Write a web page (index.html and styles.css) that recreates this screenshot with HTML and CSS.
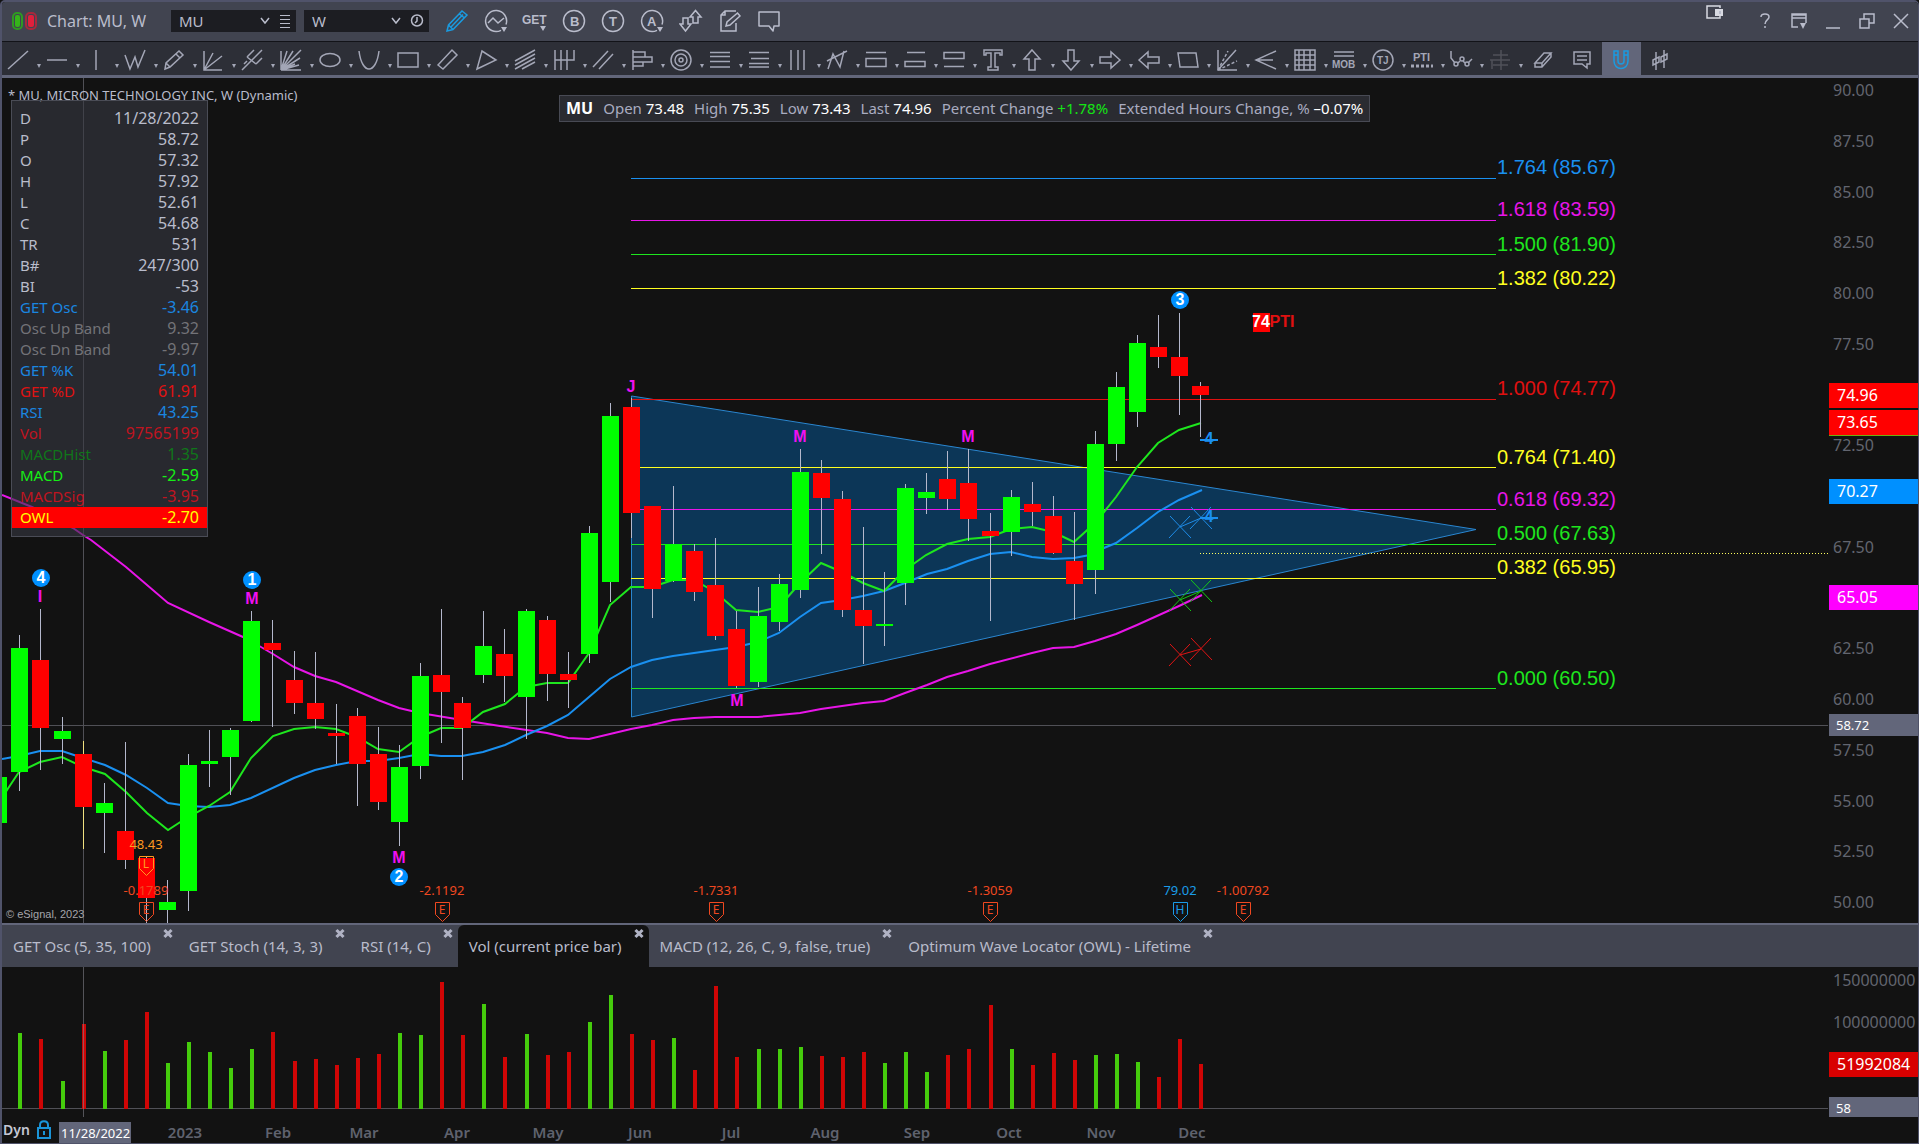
FILE: index.html
```html
<!DOCTYPE html>
<html lang="en">
<head>
<meta charset="utf-8">
<title>Chart: MU, W</title>
<link rel="stylesheet" href="styles.css">
</head>
<body>
<main class="window">
  <header class="titlebar">
    <svg class="link-state" width="26" height="18" viewBox="0 0 26 18" aria-hidden="true">
      <rect x="1" y="1" width="9" height="16" rx="4" fill="none" stroke="#2f9a22" stroke-width="2"/><rect x="3" y="3" width="5" height="12" rx="2" fill="#35b41a"/>
      <rect x="14" y="1" width="10" height="16" rx="4" fill="none" stroke="#a8283c" stroke-width="2"/><rect x="16" y="3" width="6" height="12" rx="2" fill="#e0203c"/>
    </svg>
    <h1 class="title">Chart: MU, W</h1>
    <div class="picker">
      <select aria-label="Symbol"><option>MU</option></select>
      <svg width="12" height="22" viewBox="0 0 12 22"><path d="M2 8l4 5 4-5"/></svg>
      <svg width="12" height="22" viewBox="0 0 12 22"><path d="M1 5.500h10M1 9.500h10M1 13.500h10M1 17.500h10" stroke-width="1"/></svg>
    </div>
    <div class="picker">
      <select aria-label="Interval"><option>W</option></select>
      <svg width="12" height="22" viewBox="0 0 12 22"><path d="M2 8l4 5 4-5"/></svg>
      <svg width="14" height="22" viewBox="0 0 14 22"><circle cx="7" cy="10.500" r="5.500"/><path d="M7 7v4l-2 2"/></svg>
    </div>
    <div class="commands">
      <button class="cmd on" aria-label="Draw"><svg width="24" height="24" viewBox="0 0 24 24"><path d="M2 22l1.500-6L17 2l5 4L8 20.500zM3.500 16L8 20.500M14.500 5l5 4M6 18L18 5.500"/></svg></button>
      <button class="cmd" aria-label="Studies"><svg width="24" height="24" viewBox="0 0 24 24"><path d="M17 21.300A10.500 10.500 0 1 1 22 15.500M4 14l5-5 5 5 6-5"/><path class="solid" d="M17 18h6l-3 5z"/></svg></button>
      <button class="cmd" aria-label="GET studies"><svg width="26" height="24" viewBox="0 0 26 24"><text x="0" y="15" font-size="12">GET</text><path class="solid" d="M18 17h6l-3 5z"/></svg></button>
      <button class="cmd" aria-label="Bars"><svg width="24" height="24" viewBox="0 0 24 24"><circle cx="12" cy="12" r="10.500"/><text x="8" y="17" font-size="13">B</text></svg></button>
      <button class="cmd" aria-label="Templates"><svg width="24" height="24" viewBox="0 0 24 24"><circle cx="12" cy="12" r="10.500"/><text x="8" y="17" font-size="13">T</text></svg></button>
      <button class="cmd" aria-label="Alerts"><svg width="24" height="24" viewBox="0 0 24 24"><path d="M17 21.300A10.500 10.500 0 1 1 22 15.500"/><text x="7" y="17" font-size="13">A</text><path class="solid" d="M17 18h6l-3 5z"/></svg></button>
      <button class="cmd" aria-label="Trade"><svg width="24" height="24" viewBox="0 0 24 24"><path d="M11 8l5.500-6.500L22 8h-3v6h-5V8zM1 15h3V9h5v6h3l-5.500 7z"/></svg></button>
      <button class="cmd" aria-label="Edit notes"><svg width="24" height="24" viewBox="0 0 24 24"><path d="M18 14v8H3V6l4-4h11M3 6h4V2M8 17l1-4L19.500 4 22 7 12 16z"/></svg></button>
      <button class="cmd" aria-label="Chat"><svg width="24" height="24" viewBox="0 0 24 24"><path d="M2 3h20v14h-5l-1 5-4-5H2z" stroke-linejoin="round"/></svg></button>
    </div>
    <div class="window-buttons">
      <button class="popout" aria-label="Pop out"><svg width="18" height="15" viewBox="0 0 18 15"><path d="M14 3V1H1v12h13v-2" stroke="#d8dae2"/><rect class="solid light" x="9" y="4" width="8" height="7"/><rect class="solid" x="13" y="6" width="2" height="3"/></svg></button>
      <button class="cmd" aria-label="Help"><svg width="16" height="18" viewBox="0 0 16 18"><path d="M4 5c0-4 8-4 8 0 0 3-4 3-4 7M8 14v2"/></svg></button>
      <button class="cmd" aria-label="Layout"><svg width="18" height="18" viewBox="0 0 18 18"><path d="M8 15H2V2h14v9M2 6h14M2 3h14"/><path class="solid" d="M10 11h6l-3 6z"/></svg></button>
      <button class="cmd" aria-label="Minimize"><svg width="18" height="18" viewBox="0 0 18 18"><path d="M2 16h14"/></svg></button>
      <button class="cmd" aria-label="Restore"><svg width="18" height="18" viewBox="0 0 18 18"><path d="M2 7h9v9H2zM6 7V2h10v9h-5"/></svg></button>
      <button class="cmd" aria-label="Close"><svg width="18" height="18" viewBox="0 0 18 18"><path d="M2 2l14 14M16 2L2 16"/></svg></button>
    </div>
  </header>

  <nav class="tools" aria-label="Drawing tools">
    <button class="tool more" aria-label="Line"><svg viewBox="0 0 24 24"><path d="M2 21L22 3"/></svg></button>
    <button class="tool more" aria-label="Horizontal line"><svg viewBox="0 0 24 24"><path d="M2 12h20"/></svg></button>
    <button class="tool more" aria-label="Vertical line"><svg viewBox="0 0 24 24"><path d="M12 2v20"/></svg></button>
    <button class="tool more" aria-label="Polyline"><svg viewBox="0 0 24 24"><path d="M2 7l5 14 5-12 3 10 7-17"/></svg></button>
    <button class="tool more" aria-label="Pencil"><svg viewBox="0 0 24 24"><path d="M3 21l1-6L17 3l4 4L8 19zM4 15l4 4M14 6l4 4"/></svg></button>
    <button class="tool more" aria-label="Gann fan"><svg viewBox="0 0 24 24"><path d="M3 3v19h18M3 22L21 8M3 22L12 5"/></svg></button>
    <button class="tool more" aria-label="Pitchfork"><svg viewBox="0 0 24 24"><path d="M2 22L22 2M7 9l9 7M7 9l7-7M16 16l6-6M4 16l3-3"/></svg></button>
    <button class="tool more" aria-label="Speed lines"><svg viewBox="0 0 24 24"><path d="M2 22V3M2 22L8 3M2 22L22 2M2 22l19-12M2 22h20M2 22l18-5M2 22L14 3M2 22l14-6"/></svg></button>
    <button class="tool more" aria-label="Ellipse"><svg viewBox="0 0 24 24"><ellipse cx="12" cy="12" rx="10" ry="6.500"/></svg></button>
    <button class="tool more" aria-label="Arc"><svg viewBox="0 0 24 24"><path d="M2 3c3 24 17 24 20 0"/></svg></button>
    <button class="tool more" aria-label="Rectangle"><svg viewBox="0 0 24 24"><path d="M2 5h20v14H2z"/></svg></button>
    <button class="tool more" aria-label="Parallelogram"><svg viewBox="0 0 24 24"><path d="M3 17L17 2l5 5L8 21z"/></svg></button>
    <button class="tool more" aria-label="Triangle"><svg viewBox="0 0 24 24"><path d="M3 21L8 3l14 9z"/></svg></button>
    <button class="tool more" aria-label="Channel"><svg viewBox="0 0 24 24"><path d="M2 13L22 2M2 17L22 6M2 21l20-11M9 21l13-7"/></svg></button>
    <button class="tool more" aria-label="Cycles"><svg viewBox="0 0 24 24"><path d="M3 2v20M9 2v20M15 2v20M22 2v10H3"/></svg></button>
    <button class="tool more" aria-label="Parallel lines"><svg viewBox="0 0 24 24"><path d="M2 19L17 3M8 21L22 6"/></svg></button>
    <button class="tool more" aria-label="Volume profile"><svg viewBox="0 0 24 24"><path d="M3 2v20M3 4h12v5H3M3 9h19v5H3M3 14h10v4H3"/></svg></button>
    <button class="tool more" aria-label="Fibonacci circles"><svg viewBox="0 0 24 24"><circle cx="12" cy="12" r="10"/><circle cx="12" cy="12" r="6"/><circle cx="12" cy="12" r="2"/></svg></button>
    <button class="tool more" aria-label="Retracement"><svg viewBox="0 0 24 24"><path d="M2 4.500h20M2 8.500h20M2 13.500h20M2 19h20"/></svg></button>
    <button class="tool more" aria-label="Extension"><svg viewBox="0 0 24 24"><path d="M2 4.500h20M4 10.500h18M2 15.500h20M2 19h20"/></svg></button>
    <button class="tool more" aria-label="Time lines"><svg viewBox="0 0 24 24"><path d="M5 2v20M12 2v20M18 2v20"/></svg></button>
    <button class="tool more" aria-label="Regression"><svg viewBox="0 0 24 24"><path d="M3 21L8 6l7 13 4-16M2 13L22 3"/></svg></button>
    <button class="tool more" aria-label="Price range"><svg viewBox="0 0 24 24"><path d="M2 4.500h20M2 10.500h20v8H2z"/></svg></button>
    <button class="tool more" aria-label="Price band low"><svg viewBox="0 0 24 24"><path d="M4 4.500h18M2 13.500h20v5H2z"/></svg></button>
    <button class="tool more" aria-label="Price band high"><svg viewBox="0 0 24 24"><path d="M2 4.500h20v6H2zM2 18.500h20"/></svg></button>
    <button class="tool more" aria-label="Text"><svg viewBox="0 0 24 24"><path d="M3 2h18v5h-2V5h-5v14h3v3H7v-3h3V5H5v2H3z"/></svg></button>
    <button class="tool more" aria-label="Up arrow"><svg viewBox="0 0 24 24"><path d="M12 2l8 9h-5v11H9V11H4z"/></svg></button>
    <button class="tool more" aria-label="Down arrow"><svg viewBox="0 0 24 24"><path d="M12 22l8-9h-5V2H9v11H4z"/></svg></button>
    <button class="tool more" aria-label="Right arrow"><svg viewBox="0 0 24 24"><path d="M22 12l-9-8v5H2v6h11v5z"/></svg></button>
    <button class="tool more" aria-label="Left arrow"><svg viewBox="0 0 24 24"><path d="M2 12l9-8v5h11v6H11v5z"/></svg></button>
    <button class="tool more" aria-label="Zone"><svg viewBox="0 0 24 24"><path d="M2 5h18l2 14H4z"/></svg></button>
    <button class="tool more" aria-label="Square of range"><svg viewBox="0 0 24 24"><path d="M3 2v20h19M3 22L21 2"/><path d="M3 22L13 3M3 22l19-9" stroke-dasharray="3 2"/></svg></button>
    <button class="tool more" aria-label="Andrews fork"><svg viewBox="0 0 24 24"><path d="M22 3L2 12l20 9M2 12h17"/></svg></button>
    <button class="tool more" aria-label="Grid"><svg viewBox="0 0 24 24"><path d="M2 2h20v20H2zM6 2v20M11 2v20M17 2v20M2 7h20M2 12h20M2 17h20"/></svg></button>
    <button class="tool more" aria-label="Make or break"><svg viewBox="0 0 24 24"><path d="M2 4h20M2 8h20"/><text x="0" y="20" font-size="10">MOB</text></svg></button>
    <button class="tool more" aria-label="Trade journal"><svg viewBox="0 0 24 24"><circle cx="12" cy="12" r="10"/><text x="6" y="16" font-size="10">TJ</text></svg></button>
    <button class="tool more" aria-label="Profit taking index"><svg viewBox="0 0 24 24"><text x="3" y="13" font-size="11">PTI</text><path d="M1 18h22" stroke-width="3" stroke-dasharray="3 2"/></svg></button>
    <button class="tool more" aria-label="Elliott wave"><svg viewBox="0 0 24 24"><path d="M2 3v7l4 5M9 15l2-2M14 13l2 2M19 15l4-4"/><circle cx="7" cy="16" r="2"/><circle cx="13" cy="11" r="2"/><circle cx="18" cy="16" r="2"/></svg></button>
    <button class="tool more" aria-label="Ladder" disabled><svg viewBox="0 0 24 24"><path d="M13 2v20M5 7h15M2 12h20M5 17h15M4 12v9"/></svg></button>
    <button class="tool first" aria-label="Erase"><svg viewBox="0 0 24 24"><path d="M4 15L13 5h7l-9 10zM4 15v4h7l9-10V5M11 15v4"/></svg></button>
    <button class="tool" aria-label="Comment"><svg viewBox="0 0 24 24"><path d="M4 4h16v12h-3v4l-5-4H4zM7 8h10M7 12h10"/></svg></button>
    <button class="tool active" aria-label="Magnet"><svg viewBox="0 0 24 24"><path d="M5 3v10c0 10 14 10 14 0V3h-4v10c0 4-6 4-6 0V3zM5 7h4M15 7h4"/></svg></button>
    <button class="tool" aria-label="Settings"><svg viewBox="0 0 24 24"><path d="M8 4v18M16 2v18M5 12l6-3v5l-6 3zM13 9l6-3v5l-6 3z"/></svg></button>
  </nav>

  <section class="chart" aria-label="Price chart">
    <svg id="price" class="plot" viewBox="2 78 1916 845" role="img" aria-label="MU weekly candles"></svg>
    <table class="legend">
      <tbody>
        <tr><th scope="row">D</th><td>11/28/2022</td></tr>
        <tr><th scope="row">P</th><td>58.72</td></tr>
        <tr><th scope="row">O</th><td>57.32</td></tr>
        <tr><th scope="row">H</th><td>57.92</td></tr>
        <tr><th scope="row">L</th><td>52.61</td></tr>
        <tr><th scope="row">C</th><td>54.68</td></tr>
        <tr><th scope="row">TR</th><td>531</td></tr>
        <tr><th scope="row">B#</th><td>247/300</td></tr>
        <tr><th scope="row">BI</th><td>-53</td></tr>
        <tr class="blue"><th scope="row">GET Osc</th><td>-3.46</td></tr>
        <tr class="grey"><th scope="row">Osc Up Band</th><td>9.32</td></tr>
        <tr class="grey"><th scope="row">Osc Dn Band</th><td>-9.97</td></tr>
        <tr class="blue"><th scope="row">GET %K</th><td>54.01</td></tr>
        <tr class="red"><th scope="row">GET %D</th><td>61.91</td></tr>
        <tr class="blue"><th scope="row">RSI</th><td>43.25</td></tr>
        <tr class="crimson"><th scope="row">Vol</th><td>97565199</td></tr>
        <tr class="green"><th scope="row">MACDHist</th><td>1.35</td></tr>
        <tr class="lime"><th scope="row">MACD</th><td>-2.59</td></tr>
        <tr class="crimson"><th scope="row">MACDSig</th><td>-3.95</td></tr>
        <tr class="owl"><th scope="row">OWL</th><td>-2.70</td></tr>
      </tbody>
    </table>
    <div class="quote">
      <b>MU</b>
      <span>Open <em>73.48</em></span>
      <span>High <em>75.35</em></span>
      <span>Low <em>73.43</em></span>
      <span>Last <em>74.96</em></span>
      <span>Percent Change <em class="up">+1.78%</em></span>
      <span>Extended Hours Change, % <em>–0.07%</em></span>
    </div>
  </section>

  <div class="tabs" role="tablist">
    <div class="tab"><button role="tab">GET Osc (5, 35, 100)</button><button class="close" aria-label="Close GET Osc"></button></div>
    <div class="tab"><button role="tab">GET Stoch (14, 3, 3)</button><button class="close" aria-label="Close GET Stoch"></button></div>
    <div class="tab"><button role="tab">RSI (14, C)</button><button class="close" aria-label="Close RSI"></button></div>
    <div class="tab current"><button role="tab" aria-selected="true">Vol (current price bar)</button><button class="close" aria-label="Close Vol"></button></div>
    <div class="tab"><button role="tab">MACD (12, 26, C, 9, false, true)</button><button class="close" aria-label="Close MACD"></button></div>
    <div class="tab"><button role="tab">Optimum Wave Locator (OWL) - Lifetime</button><button class="close" aria-label="Close OWL"></button></div>
  </div>

  <section aria-label="Volume">
    <svg id="volume" class="plot" viewBox="2 967 1916 176" role="img" aria-label="Weekly volume"></svg>
  </section>
</main>
<script src="chart.js"></script>
</body>
</html>
```
FILE: styles.css
```css
* { box-sizing: border-box; }

body {
  margin: 0;
  background: #121212;
  color: #b9bccb;
  font: 15px/20px "Noto Sans", sans-serif;
}

button, select {
  border: 0;
  padding: 0;
  background: none;
  color: inherit;
  font: inherit;
}

.window {
  border: solid #50536a;
  border-width: 2px 1px 1px 2px;
  border-radius: 5px 5px 0 0;
  overflow: hidden;
}

.titlebar {
  display: flex;
  align-items: center;
  height: 40px;
  padding: 0 0 1px 10px;
  background: #414450;
  border-bottom: 1px solid #121318;
}

.titlebar svg, .tools svg {
  display: block;
  fill: none;
  stroke: currentColor;
  stroke-width: 1.5;
}

.titlebar .link-state { stroke: none; }
.titlebar text, .tools text { fill: currentColor; stroke: none; font-family: "Liberation Sans", sans-serif; font-weight: bold; }
.titlebar .solid { fill: currentColor; stroke: none; }
.titlebar .light { fill: #d8dae2; }

.title { width: 124px; margin: 0 0 0 9px; font-size: 16px; font-weight: 400; }

.picker {
  display: flex;
  align-items: center;
  gap: 8px;
  width: 125px;
  height: 22px;
  margin-right: 8px;
  padding: 0 5px 0 8px;
  background: #1c1d22;
}

.picker select { flex: 1; min-width: 0; appearance: none; }

.commands { display: flex; }
.cmd { display: grid; place-items: center; width: 39px; height: 38px; }
.cmd.on { color: #1a9be0; }

.window-buttons { display: flex; margin-left: auto; }
.window-buttons .cmd { width: 34px; }
.popout { display: grid; align-content: start; width: 42px; padding-top: 3px; }

.tools {
  display: flex;
  height: 36px;
  overflow: hidden;
  background: #2d2f37;
  border-bottom: 3px solid #62667a;
}

.tool { position: relative; flex: none; width: 39px; height: 33px; padding: 6px 11px 3px 4px; color: #a3a6b6; }
.tool svg { width: 24px; height: 24px; }
.tool:disabled { color: #50525a; }
.tool.first { margin-left: 1px; }
.tool.active { background: #62667a; color: #1a9be0; }
.tool.first, .tool.first ~ .tool { padding: 6px 7px 3px; }
.tool.more::after {
  content: "";
  position: absolute;
  right: 0;
  bottom: 7px;
  border: 2px solid transparent;
  border-top: 4px solid #a3a6b6;
  border-bottom: 0;
}

.chart { position: relative; }
.plot { display: block; width: 100%; height: auto; background: #121212; }

.plot text { font-family: "Noto Sans", sans-serif; }
.plot .fib, .plot .wave, .plot .notice { font-family: "Liberation Sans", Arial, sans-serif; }
.plot .fib { font-size: 20px; }
.plot .wave { font-size: 16px; font-weight: bold; text-anchor: middle; }
.plot .scale { font-size: 16px; fill: #62656f; }
.plot .tag { font-size: 16px; fill: #fff; }
.plot .cursor { font-size: 13px; fill: #fff; }
.plot .month { font-size: 15px; font-weight: 600; fill: #5f626e; text-anchor: middle; }
.plot .event { font-size: 13px; text-anchor: middle; }
.plot .letter { font-size: 12px; text-anchor: middle; }
.plot .notice { font-size: 11px; fill: #a5a5aa; }
.plot .name { font-size: 13px; fill: #b9bccb; }
.plot .dyn { font-size: 14px; font-weight: 600; fill: #c4c7d4; }

.legend {
  position: absolute;
  left: 9px;
  top: 22px;
  width: 197px;
  border: 1px solid #4a4c56;
  border-collapse: separate;
  border-spacing: 0;
  padding: 7px 0 8px;
  background: rgba(55, 56, 66, 0.6);
}

.legend th, .legend td { height: 21px; padding: 0 8px 0 0; line-height: 21px; white-space: nowrap; }
.legend th { padding: 0 0 0 8px; font-weight: 400; text-align: left; }
.legend td { font-size: 16px; text-align: right; }
.blue { color: #1a86e0; }
.grey { color: #737378; }
.red { color: #e01212; }
.crimson { color: #c01420; }
.green { color: #10761a; }
.lime { color: #16ee16; }
.owl { color: #ff0; background: #f00; }

.quote {
  position: absolute;
  left: 557px;
  top: 17px;
  display: flex;
  gap: 10px;
  padding: 2px 6px 3px;
  background: #2a2b31;
  border: 1px solid #484a54;
  color: #a9acc0;
  white-space: nowrap;
}

.quote b { color: #fff; font-size: 16px; }
.quote em { font-style: normal; color: #fff; }
.quote .up { color: #14e414; }

.tabs { display: flex; height: 44px; background: #414450; border-top: 2px solid #62667a; overflow: hidden; }
.tab { display: flex; gap: 12px; padding: 0 5px 0 11px; white-space: nowrap; }
.tab.current { background: #121212; border-radius: 6px 6px 0 0; }
.close { width: 10px; height: 16px; position: relative; color: #b0b3c4; }
.close::before, .close::after {
  content: "";
  position: absolute;
  left: 0;
  top: 7px;
  width: 10px;
  height: 3px;
  background: currentColor;
  transform: rotate(45deg);
}
.close::after { transform: rotate(-45deg); }
```
FILE: chart.js
```js
const UP = '#00ff00', DOWN = '#ff0000', BLUE = '#1a90f0', MAGENTA = '#e815e8', LIME = '#1ee61e';

// x, wick top, body top, body bottom, wick bottom, rising, top of the volume bar
const bars = [
  [19,635,648,772,791,1,1033],[40,609,660,728,770,0,1039],[62,717,731,739,764,1,1081],[83,741,754,807,849,0,1024],
  [104,783,803,813,853,1,1051],[125,742,831,860,869,0,1040],[146,857,858,898,923,0,1012],[167,880,902,910,923,1,1063],
  [188,754,765,891,911,1,1042],[209,730,761,764,787,1,1052],[230,728,730,757,795,1,1068],[251,611,621,721,722,1,1049],
  [272,620,643,650,727,0,1032],[294,651,680,703,714,0,1061],[315,652,703,719,729,0,1059],[336,704,733,736,764,0,1065],
  [357,708,716,764,806,0,1058],[378,727,754,802,810,0,1054],[399,745,767,822,846,1,1033],[420,663,676,766,779,1,1035],
  [441,609,675,692,743,0,982],[462,697,703,728,780,0,1035],[483,611,646,675,683,1,1004],[504,629,654,676,702,0,1057],
  [526,609,611,697,739,1,1034],[547,616,620,674,701,0,1055],[568,652,674,680,708,0,1052],[589,526,533,654,663,1,1022],
  [610,403,416,582,602,1,995],[631,398,407,513,538,0,1034],[652,506,506,589,618,0,1040],[673,486,544,581,582,1,1038],
  [694,544,551,592,601,0,1070],[715,538,585,636,640,0,986],[736,611,629,686,688,0,1057],[758,587,616,682,687,1,1049],
  [779,574,584,622,631,1,1049],[800,449,472,590,598,1,1047],[821,460,473,498,554,0,1056],[842,491,499,610,617,0,1057],
  [863,527,610,626,664,0,1052],[884,572,624,626,646,1,1063],[905,484,488,583,605,1,1052],[926,473,492,498,514,1,1072],
  [947,451,479,499,510,0,1055],[968,449,483,519,541,0,1049],[990,513,531,536,621,0,1005],[1011,490,497,532,556,1,1049],
  [1032,482,504,512,526,0,1065],[1053,496,516,553,554,0,1053],[1074,512,561,584,620,0,1060],[1095,431,444,570,594,1,1055],
  [1116,372,387,444,461,1,1054],[1137,335,343,412,427,1,1062],[1158,315,347,357,368,0,1077],[1179,313,357,376,415,0,1039],
  [1200,382,386,395,437,0,1064]
];

const fast = '2,798 7,790 19,772 40,762 62,757 83,767 105,774 126,792 147,813 168,830 188,817 209,806 230,792 251,758 273,736 294,729 315,727 336,729 357,737 378,749 399,752 420,737 441,728 462,728 483,712 505,704 526,687 547,683 568,683 589,653 610,605 631,587 652,587 673,580 694,580 715,592 736,610 758,612 779,607 800,583 821,563 842,572 863,583 884,591 905,570 926,555 947,544 968,539 990,537 1011,529 1032,527 1053,532 1074,542 1095,523 1104,512 1116,497 1137,467 1158,443 1179,430 1201,423';
const medium = '2,759 19,756 40,751 62,751 83,758 105,765 126,775 147,788 168,803 188,806 209,807 230,805 251,798 294,778 315,770 336,765 357,761 378,761 399,758 420,754 441,756 462,756 483,752 505,745 526,735 547,726 568,715 589,697 610,679 631,667 652,660 673,656 694,653 715,650 736,647 758,642 779,633 800,617 821,603 842,600 863,596 884,591 905,583 927,574 947,569 968,561 990,554 1011,552 1032,557 1053,559 1074,558 1095,554 1104,548 1116,543 1137,528 1158,512 1179,500 1202,490';
const slow = '2,495 32,507 73,528 83,535 91,540 126,567 168,603 209,622 243,637 261,647 273,654 294,667 315,676 336,682 378,700 399,708 420,713 462,720 500,726 547,733 568,738 589,739 610,734 631,729 652,725 673,720 694,718 715,717 758,717 779,715 800,713 821,709 842,706 863,703 884,701 905,693 927,685 947,677 968,671 990,664 1032,653 1053,648 1074,647 1095,641 1116,634 1137,625 1179,606 1202,595';

// line y, label baseline, label, colour
const fibs = [
  [178,174,'1.764 (85.67)',BLUE],[220,216,'1.618 (83.59)',MAGENTA],[254,251,'1.500 (81.90)',LIME],[288,285,'1.382 (80.22)','#ffff20'],
  [399,395,'1.000 (74.77)','#e01010'],[467,464,'0.764 (71.40)','#ffff20'],[509,506,'0.618 (69.32)',MAGENTA],
  [544,540,'0.500 (67.63)',LIME],[578,574,'0.382 (65.95)','#ffff20'],[688,685,'0.000 (60.50)',LIME]
];

const rect = (x, y, w, h, fill) => `<rect x="${x}" y="${y}" width="${w}" height="${h}" fill="${fill}"/>`;
const text = (x, y, s, cls, fill) => `<text x="${x}" y="${y}" class="${cls}"${fill ? ` style="fill:${fill}"` : ''}>${s}</text>`;
const poly = (pts, c) => `<polyline points="${pts}" fill="none" stroke="${c}" stroke-width="2"/>`;
const path = (d, c, w = 1) => `<path d="${d}" fill="none" stroke="${c}" stroke-width="${w}"/>`;

function drawPrice() {
  let s = '<polygon points="631.5,396 1476,529.5 631.5,717" fill="#0c3657" stroke="#2a86d0"/>';
  for (const [y, , , c] of fibs) s += rect(631, y, 865, 1, c);
  for (let x = 1200; x < 1828; x += 3) s += rect(x, 553, 1, 1, '#ffff60');
  s += rect(2, 725, 1826, 1, '#505056') + rect(83, 78, 1, 845, '#505056');
  s += poly(slow, MAGENTA) + poly(medium, BLUE) + poly(fast, LIME);

  s += rect(-10, 777, 17, 46, UP);
  for (const [x, hi, top, bottom, lo, up] of bars) {
    s += rect(x, hi, 1, lo - hi, x === 83 ? '#f0e080' : '#b4b8cc') + rect(x - 8, top, 17, bottom - top, up ? UP : DOWN);
  }

  for (const [, y, label, c] of fibs) s += text(1497, y, label, 'fib', c);

  for (const [x, y, n] of [[41,578,4],[252,580,1],[399,877,2],[1180,300,3]]) {
    s += `<circle cx="${x}" cy="${y}" r="9" fill="#0090ff"/>` + text(x, y + 5, n, 'wave', '#fff');
  }
  for (const [x, y, l] of [[40,602,'I'],[252,604,'M'],[399,863,'M'],[631,392,'J'],[800,442,'M'],[968,442,'M'],[737,706,'M']]) {
    s += text(x, y, l, 'wave', '#f010f0');
  }
  s += rect(1253, 313, 17, 19, '#ff0000') + text(1261, 327, '74', 'wave', '#fff') + text(1282, 327, 'PTI', 'wave', '#e01010');
  for (const y of [440, 518]) s += rect(1200, y - 1, 18, 2, BLUE) + text(1209, y + 4, '4', 'wave', BLUE);

  for (const [y1, y2, c] of [[527,518,'#1e8ce8'],[600,591,'#16c816'],[655,649,'#e01414']]) {
    s += path(`M1170 ${y1-11}l21 22M1190 ${y1-11}l-21 22M1191 ${y2-11}l21 22M1211 ${y2-11}l-21 22M1180 ${y1}l21 ${y2-y1}`, c);
  }

  const event = (x, y, value, letter, c) => text(x, y, value, 'event', c) +
    path(`M${x-7}.500 ${y+7}.500h14v12l-7 7-7-7z`, c) + text(x, y + 19, letter, 'letter', c);
  s += event(146, 849, '48.43', 'L', '#ff9a20');
  for (const [x, v] of [[146,'-0.1789'],[442,'-2.1192'],[716,'-1.7331'],[990,'-1.3059'],[1243,'-1.00792']]) {
    s += event(x, 895, v, 'E', '#f04820');
  }
  s += event(1180, 895, '79.02', 'H', '#1a9ce8');

  s += text(8, 100, '* MU, MICRON TECHNOLOGY INC, W (Dynamic)', 'name') + text(6, 918, '© eSignal, 2023', 'notice');

  for (const [y, v] of [[96,'90.00'],[147,'87.50'],[198,'85.00'],[248,'82.50'],[299,'80.00'],[350,'77.50'],[451,'72.50'],[553,'67.50'],
    [654,'62.50'],[705,'60.00'],[756,'57.50'],[807,'55.00'],[857,'52.50'],[908,'50.00']]) s += text(1833, y, v, 'scale');
  for (const [y, v, c] of [[383,'74.96','#f00'],[410,'73.65','#f00'],[479,'70.27','#0090ff'],[585,'65.05','#f0f']]) {
    s += rect(1829, y, 89, 25, c) + text(1837, y + 18, v, 'tag');
  }
  s += rect(1829, 435, 89, 1, '#70b010');
  s += rect(1829, 714, 89, 22, '#62667a') + text(1836, 730, '58.72', 'cursor');
  document.getElementById('price').innerHTML = s;
}

function drawVolume() {
  let s = rect(2, 1108, 1826, 1, '#505056');
  for (const [x, , , , , up, top] of bars) s += rect(x - 1, top, 4, 1109 - top, up ? '#45cc0c' : '#cf0505');
  s += '<rect x="83" y="967" width="1" height="150" fill="#808088" fill-opacity=".6"/>';
  s += text(1833, 986, '150000000', 'scale') + text(1833, 1028, '100000000', 'scale');
  s += rect(1829, 1052, 89, 25, '#d80000') + text(1837, 1070, '51992084', 'tag');
  s += rect(1829, 1097, 89, 20, '#62667a') + text(1836, 1113, '58', 'cursor');
  for (const [x, m] of [[185,'2023'],[278,'Feb'],[364,'Mar'],[457,'Apr'],[548,'May'],[640,'Jun'],[731,'Jul'],[825,'Aug'],[917,'Sep'],
    [1009,'Oct'],[1101,'Nov'],[1192,'Dec']]) s += text(x, 1138, m, 'month');
  s += text(3, 1135, 'Dyn', 'dyn');
  s += path('M38 1128h12v10H38zM40 1128v-3c0-5 8-5 8 0v3', '#1a94d8', 2) + rect(43, 1131, 2, 4, '#1a94d8');
  s += rect(59, 1122, 72, 21, '#62667a') + text(61, 1138, '11/28/2022', 'cursor');
  document.getElementById('volume').innerHTML = s;
}

drawPrice();
drawVolume();
```
